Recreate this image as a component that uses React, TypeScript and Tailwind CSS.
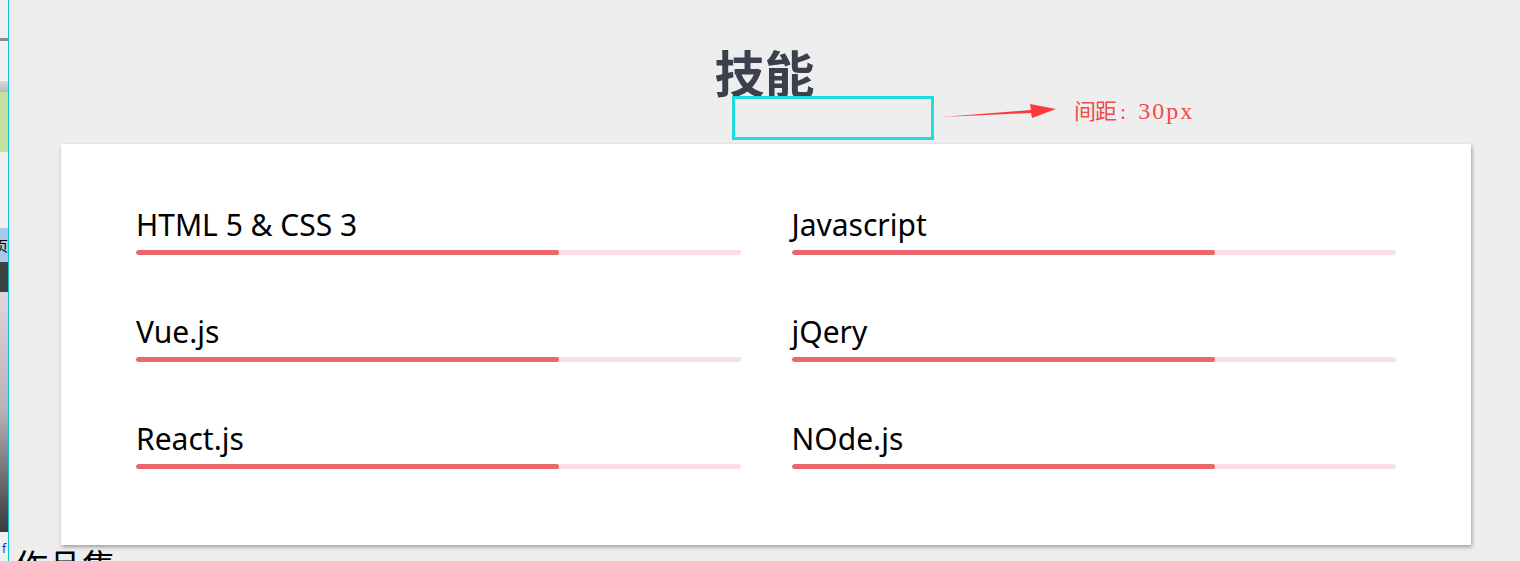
import React from "react";

const skills = [
  { name: "HTML 5 & CSS 3", level: 70 },
  { name: "Javascript", level: 70 },
  { name: "Vue.js", level: 70 },
  { name: "jQery", level: 70 },
  { name: "React.js", level: 70 },
  { name: "NOde.js", level: 70 },
];

function SkillBar({ name, level }: { name: string; level: number }) {
  return (
    <div className="flex flex-col">
      <span className="text-[30px] leading-[34px] text-black [font-family:'Noto_Sans',sans-serif]">{name}</span>
      <div className="mt-[8px] h-[5px] w-full rounded-full bg-[#f8e0e2] overflow-hidden">
        <div className="h-full rounded-full bg-[#e8686b]" style={{ width: `${level}%` }} />
      </div>
    </div>
  );
}

// sliver of the neighbouring window on the far left
function SideStrip() {
  return (
    <div className="flex flex-col w-[8px] h-[561px] shrink-0 overflow-hidden border-r border-[#11c4d2] box-content bg-[#efefef]">
      <div className="h-[38px] shrink-0" />
      <div className="h-[3px] shrink-0 bg-[#8a8a8a]" />
      <div className="h-[40px] shrink-0" />
      <div className="h-[11px] shrink-0 bg-gradient-to-b from-[#d8d8d8] to-[#b8b8b8]" />
      <div className="h-[60px] shrink-0 bg-[#c3e0a2]" />
      <div className="h-[76px] shrink-0" />
      <div className="h-[34px] shrink-0 bg-[#a9c9ea] text-[14px] leading-[34px] text-black -ml-[6px] [font-family:'Noto_Sans_CJK_SC',sans-serif]">页</div>
      <div className="h-[30px] shrink-0 bg-[#3c4442]" />
      <div className="h-[240px] shrink-0 bg-gradient-to-b from-[#e2d4dc] via-[#b8b0b4] to-[#3a3c3c]" />
      <div className="h-[10px] shrink-0" />
      <div className="text-[12px] leading-[14px] text-[#1a2ad8] pl-[2px]">f</div>
    </div>
  );
}

export default function App() {
  return (
    <div className="flex w-[1520px] h-[561px] overflow-hidden bg-[#eeeeee]">
      <SideStrip />
      <main className="relative flex-1 flex flex-col">
        <h2 className="mt-[42px] shrink-0 text-center text-[50px] leading-[58px] font-bold text-[#3b404c] [font-family:'Noto_Sans_CJK_SC',sans-serif]">
          技能
        </h2>

        {/* annotation: spacing marker */}
        <div className="absolute left-[723px] top-[96px] w-[202px] h-[44px] border-[3px] border-[#1cdede]" />
        <svg className="absolute left-[932px] top-[100px]" width="116" height="22" viewBox="0 0 116 22">
          <polygon points="1,17 90,10 89,4 115,9 91,18 90,13" fill="#fb3a3a" />
        </svg>
        <span className="absolute left-[1065px] top-[97px] flex items-baseline text-[#f24a4a] [font-family:'Liberation_Serif','Noto_Sans_CJK_SC',serif]">
          <span className="text-[22px] leading-[28px] tracking-[-1px]">间距</span>
          <span className="text-[22px] leading-[28px] ml-[4px] mr-[12px]">:</span>
          <span className="text-[24px] leading-[28px] tracking-[2px]">30px</span>
        </span>

        <section className="mt-[44px] ml-[52px] w-[1410px] h-[401px] shrink-0 bg-white shadow-[1px_2px_4px_rgba(0,0,0,0.35)] px-[75px] pt-[64px]">
          <div className="grid grid-cols-2 gap-x-[51px] gap-y-[60px]">
            {skills.map((s) => (
              <SkillBar key={s.name} name={s.name} level={s.level} />
            ))}
          </div>
        </section>

        <div className="mt-[0px] ml-[5px] shrink-0 text-[34px] leading-[40px] text-black [font-family:'Noto_Sans_CJK_SC',sans-serif]">
          作品集
        </div>
      </main>
    </div>
  );
}
